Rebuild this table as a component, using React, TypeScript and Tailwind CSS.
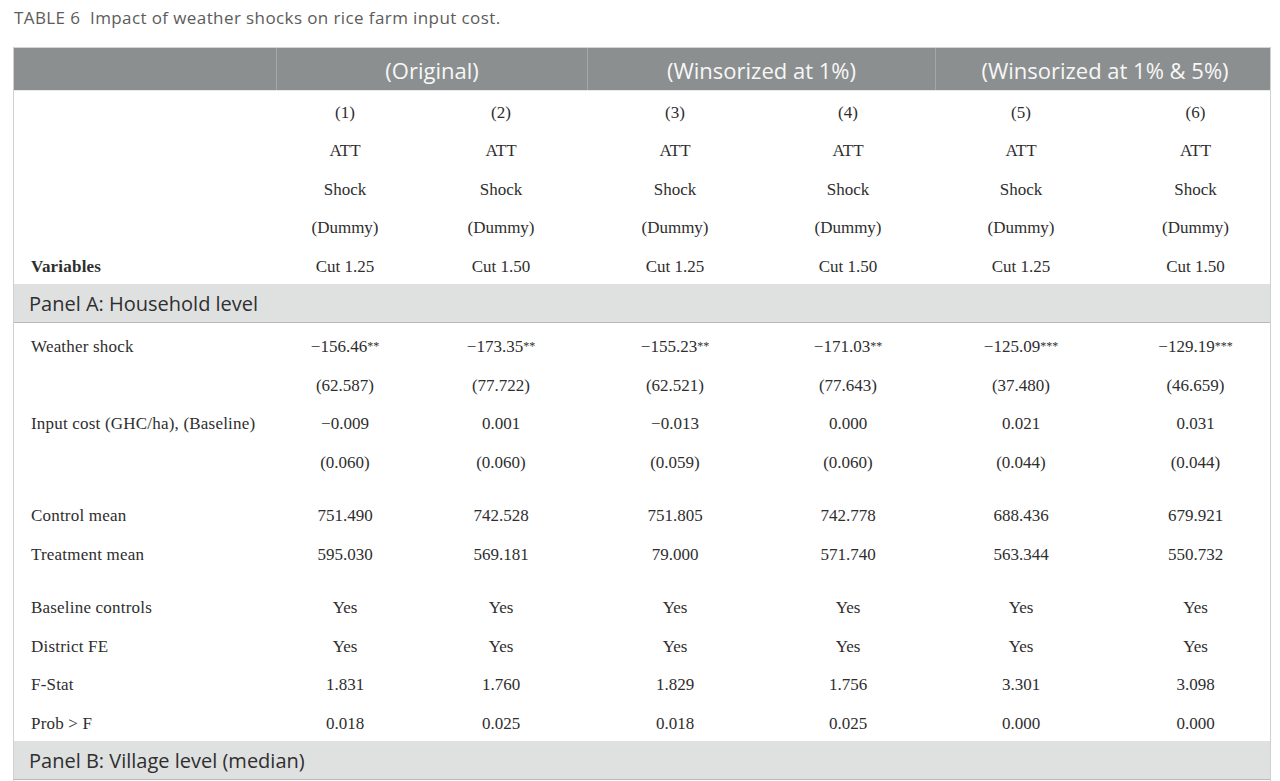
import React from "react";

const SERIF = "font-['Liberation_Serif',serif]";
const SANS = "font-['Open_Sans',sans-serif]";

const colClasses = [
  "w-[164px]",
  "w-[148px]",
  "w-[200px]",
  "w-[146px]",
  "w-[200px]",
  "w-[149px]",
];

type Cell = string | { v: string; s: string };

function Row({
  label,
  cells,
  bold,
  h = "h-[38.5px]",
}: {
  label: string;
  cells: Cell[];
  bold?: boolean;
  h?: string;
}) {
  return (
    <div className={`flex ${h} items-center pt-[4px] text-[17px] text-[#2e2e2e] ${SERIF}`}>
      <div className={`w-[249px] shrink-0 pl-[17px] tracking-[0.2px] ${bold ? "font-bold" : ""}`}>{label}</div>
      {cells.map((c, i) => (
        <div key={i} className={`${colClasses[i]} shrink-0 text-center`}>
          {typeof c === "string" ? (
            c
          ) : (
            <span>
              {c.v}
              <sup className="text-[12px] relative top-[-2px]">{c.s}</sup>
            </span>
          )}
        </div>
      ))}
    </div>
  );
}

function Panel({ text }: { text: string }) {
  return (
    <div
      className={`h-[39px] bg-[#dfe1e1] border-b border-[#b9bbbb] flex items-center pt-[3px] pl-[15px] text-[20px] text-[#2f2f2f] ${SANS}`}
    >
      {text}
    </div>
  );
}

export default function App() {
  return (
    <div className="w-[1280px] h-[781px] bg-white overflow-hidden">
      <div className={`h-[47px] pl-[14px] pt-[8px] leading-[20px] text-[17px] tracking-[0.4px] text-[#5c5c5c] ${SANS}`}>
        TABLE 6&nbsp;&nbsp;Impact of weather shocks on rice farm input cost.
      </div>
      <div className="ml-[13px] w-[1258px] border-x border-[#cfcfcf]">
        <div
          className={`flex h-[44px] bg-[#8b8f90] border-t border-[#d4d6d6] border-b border-b-[#e9eaea] text-[22px] text-[#f7f7f7] ${SANS}`}
        >
          <div className="w-[262px] shrink-0" />
          <div className="w-[311px] shrink-0 border-l border-[#a3a7a8] flex items-center justify-center pt-[3px]">
            (Original)
          </div>
          <div className="w-[348px] shrink-0 border-l border-[#a3a7a8] flex items-center justify-center pt-[3px]">
            (Winsorized at 1%)
          </div>
          <div className="flex-1 border-l border-[#a3a7a8] flex items-center justify-center pl-[4px] pt-[3px]">
            (Winsorized at 1% &amp; 5%)
          </div>
        </div>

        <Row h="h-[38.6px]" label="" cells={["(1)", "(2)", "(3)", "(4)", "(5)", "(6)"]} />
        <Row h="h-[38.6px]" label="" cells={["ATT", "ATT", "ATT", "ATT", "ATT", "ATT"]} />
        <Row h="h-[38.6px]" label="" cells={["Shock", "Shock", "Shock", "Shock", "Shock", "Shock"]} />
        <Row
          h="h-[38.6px]"
          label=""
          cells={["(Dummy)", "(Dummy)", "(Dummy)", "(Dummy)", "(Dummy)", "(Dummy)"]}
        />
        <Row
          h="h-[38.6px]"
          bold
          label="Variables"
          cells={["Cut 1.25", "Cut 1.50", "Cut 1.25", "Cut 1.50", "Cut 1.25", "Cut 1.50"]}
        />

        <Panel text="Panel A: Household level" />

        <div className="pt-[3px]">
          <Row
            label="Weather shock"
            cells={[
              { v: "\u2212156.46", s: "**" },
              { v: "\u2212173.35", s: "**" },
              { v: "\u2212155.23", s: "**" },
              { v: "\u2212171.03", s: "**" },
              { v: "\u2212125.09", s: "***" },
              { v: "\u2212129.19", s: "***" },
            ]}
          />
          <Row label="" cells={["(62.587)", "(77.722)", "(62.521)", "(77.643)", "(37.480)", "(46.659)"]} />
          <Row
            label="Input cost (GHC/ha), (Baseline)"
            cells={["\u22120.009", "0.001", "\u22120.013", "0.000", "0.021", "0.031"]}
          />
          <Row label="" cells={["(0.060)", "(0.060)", "(0.059)", "(0.060)", "(0.044)", "(0.044)"]} />
          <div className="h-[15px]" />
          <Row label="Control mean" cells={["751.490", "742.528", "751.805", "742.778", "688.436", "679.921"]} />
          <Row label="Treatment mean" cells={["595.030", "569.181", "79.000", "571.740", "563.344", "550.732"]} />
          <div className="h-[15px]" />
          <Row label="Baseline controls" cells={["Yes", "Yes", "Yes", "Yes", "Yes", "Yes"]} />
          <Row label="District FE" cells={["Yes", "Yes", "Yes", "Yes", "Yes", "Yes"]} />
          <Row label="F-Stat" cells={["1.831", "1.760", "1.829", "1.756", "3.301", "3.098"]} />
          <Row label="Prob > F" cells={["0.018", "0.025", "0.018", "0.025", "0.000", "0.000"]} />
        </div>

        <Panel text="Panel B: Village level (median)" />
        <div className="h-[20px]" />
      </div>
    </div>
  );
}
